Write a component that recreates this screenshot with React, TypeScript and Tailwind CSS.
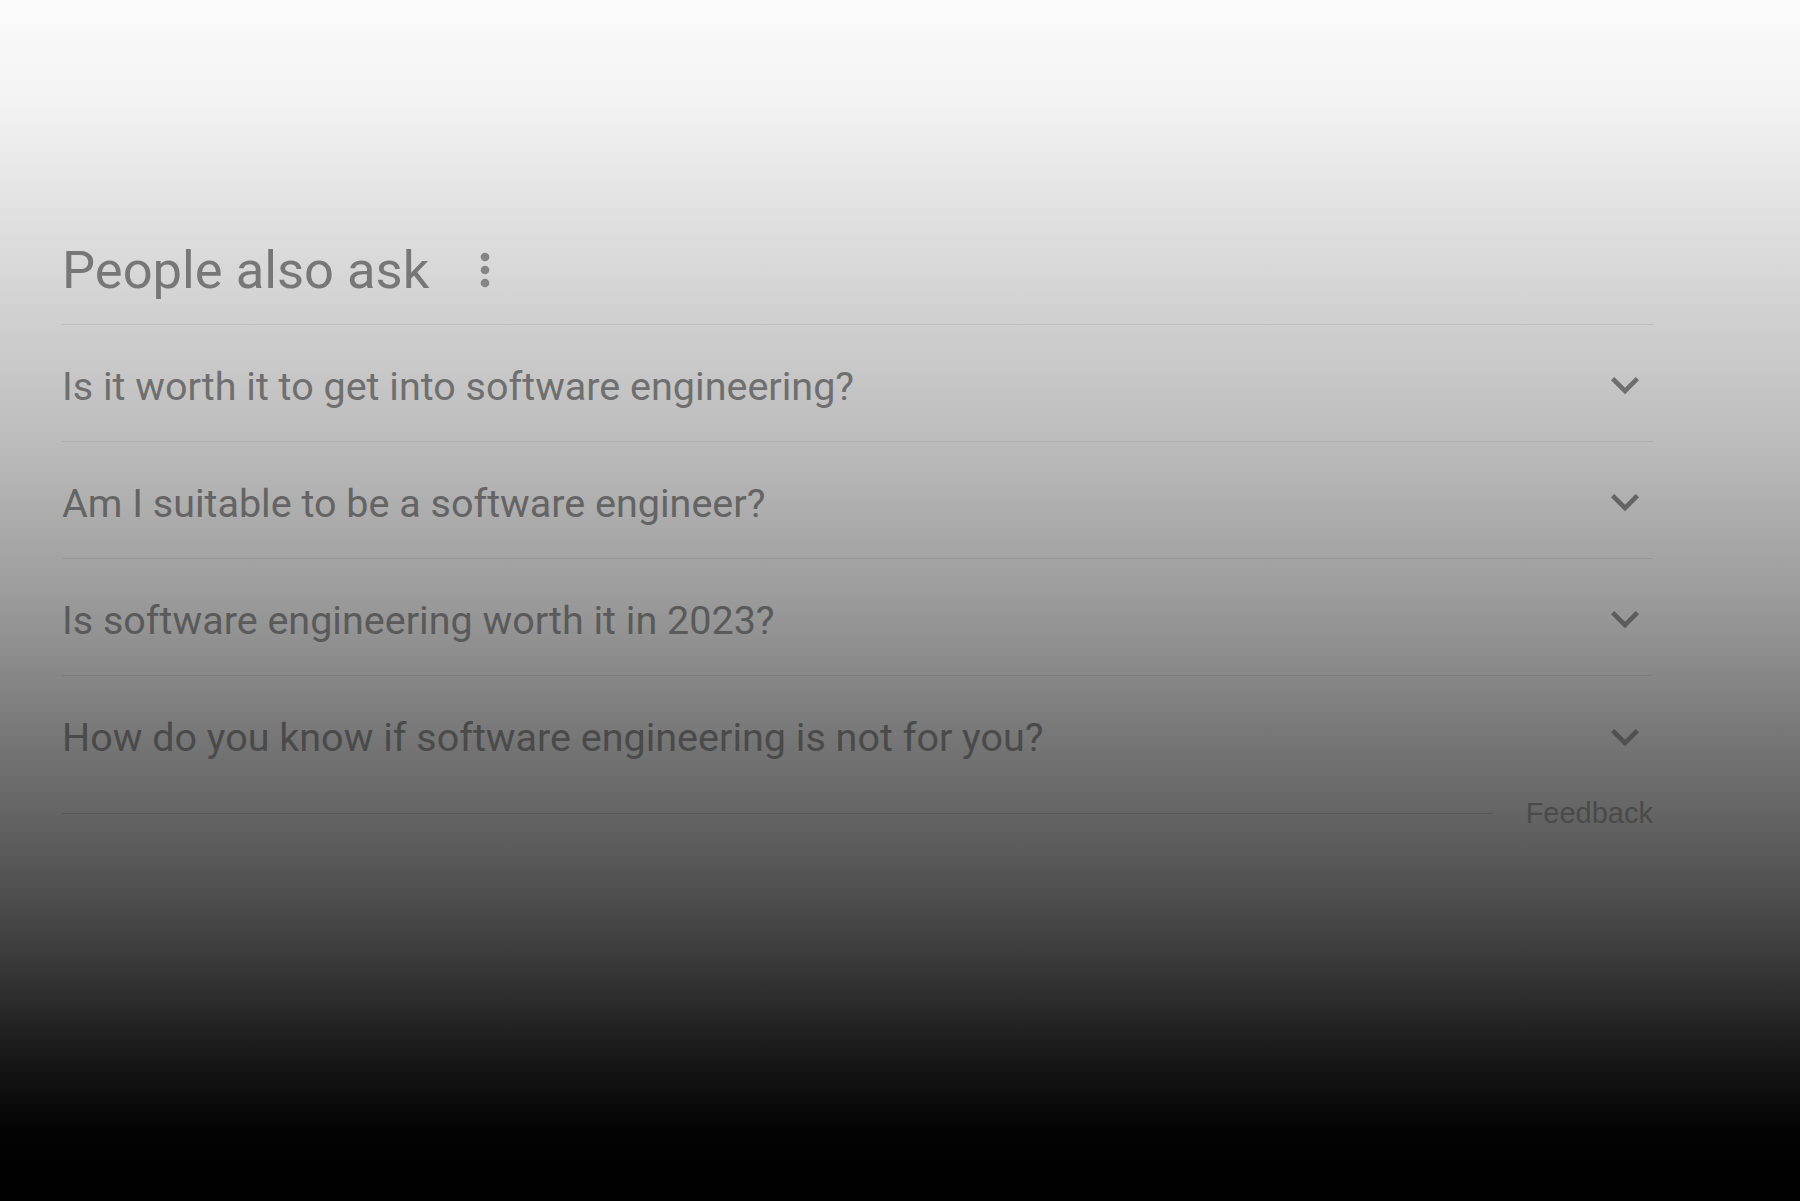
import React from "react";

const questions = [
  { text: "Is it worth it to get into software engineering?", color: "text-[#6f6f6f]", icon: "text-[#6e6e6e]" },
  { text: "Am I suitable to be a software engineer?", color: "text-[#646464]", icon: "text-[#646464]" },
  { text: "Is software engineering worth it in 2023?", color: "text-[#5a5a5a]", icon: "text-[#5c5c5c]" },
  { text: "How do you know if software engineering is not for you?", color: "text-[#4a4a4a]", icon: "text-[#505050]" },
];

function MoreVert() {
  return (
    <svg viewBox="0 0 24 24" className="h-[52px] w-[52px] fill-current text-[#858585]">
      <path d="M12 8c1.1 0 2-.9 2-2s-.9-2-2-2-2 .9-2 2 .9 2 2 2zm0 2c-1.1 0-2 .9-2 2s.9 2 2 2 2-.9 2-2-.9-2-2-2zm0 6c-1.1 0-2 .9-2 2s.9 2 2 2 2-.9 2-2-.9-2-2-2z" />
    </svg>
  );
}

function ExpandMore({ className }: { className: string }) {
  return (
    <svg viewBox="0 0 24 24" className={`mt-[4px] h-[56px] w-[56px] fill-current ${className}`}>
      <path d="M16.59 8.59L12 13.17 7.41 8.59 6 10l6 6 6-6z" />
    </svg>
  );
}

export default function App() {
  return (
    <div className="h-[1201px] w-full overflow-hidden bg-[linear-gradient(180deg,#fbfbfb_0px,#f3f3f3_100px,#e3e3e3_200px,#d3d3d3_300px,#c8c8c8_370px,#bcbcbc_442px,#a3a3a3_560px,#969696_620px,#767676_740px,#636363_820px,#4d4d4d_900px,#333333_980px,#1a1a1a_1050px,#030303_1130px,#000000_1201px)] font-['Roboto',sans-serif]">
      <div className="ml-[62px] w-[1591px] pt-[215px]">
        <div className="flex h-[110px] items-center border-b border-black/[0.08]">
          <h2 className="pt-[2px] text-[52.5px] leading-none font-normal text-[#777777]">People also ask</h2>
          <button className="ml-[30px] flex items-center">
            <MoreVert />
          </button>
        </div>

        {questions.map((q, i) => (
          <div
            key={i}
            className={`flex h-[117px] items-center justify-between ${i < 3 ? "border-b border-black/[0.08]" : ""}`}
          >
            <span className={`pt-[7px] text-[39.5px] leading-none ${q.color}`}>{q.text}</span>
            <ExpandMore className={q.icon} />
          </div>
        ))}

        <div className="flex h-[40px] items-center">
          <div className="h-px flex-1 bg-black/[0.12]" />
          <span className="ml-[33px] font-['Liberation_Sans',sans-serif] text-[29px] leading-none text-[#4a4a4a]">
            Feedback
          </span>
        </div>
      </div>
    </div>
  );
}
